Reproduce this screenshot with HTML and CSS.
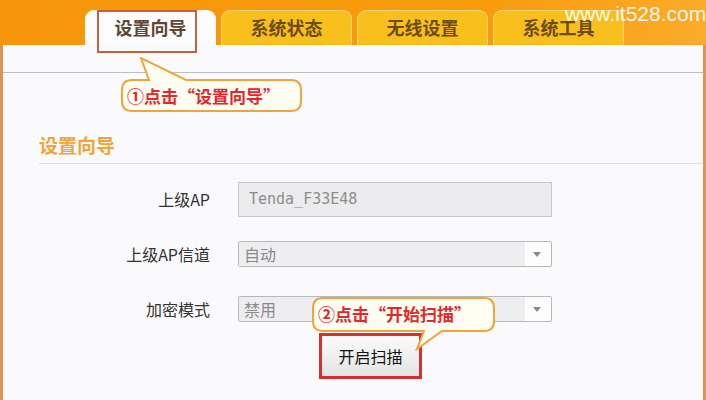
FILE: index.html
```html
<!DOCTYPE html>
<html>
<head>
  <title>设置向导</title>
  <link rel="stylesheet" href="styles.css">
</head>
<body>
  <div class="page">
    <div class="frame">
      <!-- top tab bar -->
      <div class="header">
        <div class="tab active">设置向导</div>
        <div class="tab">系统状态</div>
        <div class="tab">无线设置</div>
        <div class="tab">系统工具</div>
      </div>
      <div class="subbar"></div>

      <div class="section">
        <div class="section-title">设置向导</div>
      </div>

      <!-- wizard form -->
      <div class="form">
        <div class="label">上级AP</div>
        <div class="field">
          <div class="input disabled">Tenda_F33E48</div>
        </div>

        <div class="label">上级AP信道</div>
        <div class="field">
          <div class="select">
            <span class="select-value">自动</span>
            <span class="arrow"></span>
          </div>
        </div>

        <div class="label">加密模式</div>
        <div class="field">
          <div class="select">
            <span class="select-value">禁用</span>
            <span class="arrow"></span>
          </div>
        </div>
      </div>

      <div class="actions">
        <button class="scan-btn">开启扫描</button>
      </div>
    </div>

    <!-- annotations drawn over the screenshot -->
    <div class="watermark">www.it528.com</div>
    <div class="tab-mark"></div>

    <div class="callout callout-1">
      <svg width="182" height="56" viewBox="0 0 182 56">
        <path d="M11,23 H28 L20,1 L65,23 H170 Q180,23 180,33 V44 Q180,54 170,54 H11 Q1,54 1,44 V33 Q1,23 11,23 Z" fill="#fffdf2" stroke="#eea63c" stroke-width="2"/>
      </svg>
      <span class="callout-text">①点击“设置向导”</span>
    </div>

    <div class="callout callout-2">
      <svg width="184" height="54" viewBox="0 0 184 54">
        <path d="M11,1 H172 Q182,1 182,11 V24 Q182,34 172,34 H130 L105,52 L112,34 H11 Q1,34 1,24 V11 Q1,1 11,1 Z" fill="#fffdf2" stroke="#eea63c" stroke-width="2"/>
      </svg>
      <span class="callout-text">②点击“开始扫描”</span>
    </div>
  </div>
</body>
</html>
```

FILE: styles.css
```css
body {
  margin: 0;
  padding: 0;
  background-color: #fafafc;
  font-family: "Noto Sans CJK SC", "Liberation Sans", sans-serif;
}

.page {
  position: relative;
  width: 706px;
  height: 400px;
  overflow: hidden;
}

.frame {
  height: 400px;
  border-left: 3px solid #d99456;
  border-right: 3px solid #d99456;
  background-color: #fafafc;
}

/* header and tabs */

.header {
  height: 45px;
  margin: 0 -3px;
  padding-left: 85px;
  display: flex;
  align-items: flex-end;
  gap: 5px;
  background: linear-gradient(90deg, #f7960a 0%, #f89c0e 70%, #fbab2a 100%);
}

.tab {
  width: 131px;
  height: 35px;
  box-sizing: border-box;
  display: flex;
  align-items: center;
  justify-content: center;
  background-color: #f9bf1c;
  border: 1px solid #fcd775;
  border-bottom: none;
  border-radius: 9px 9px 0 0;
  color: #6b4c12;
  font-size: 18px;
  font-weight: bold;
  padding-bottom: 2px;
}

.tab.active {
  background-color: #fcfcfd;
  border-color: #fcfcfd;
  color: #5e4632;
}

.subbar {
  height: 27px;
  border-bottom: 1px solid #bdbdc2;
}

.section {
  padding: 60px 0 0 36px;
}

.section-title {
  font-size: 19px;
  font-weight: bold;
  line-height: 24px;
  color: #f0a53c;
  padding-bottom: 6px;
  border-bottom: 1px solid #e2e2e6;
}

/* form */

.form {
  display: grid;
  grid-template-columns: 207px 314px;
  grid-auto-rows: 40px;
  column-gap: 28px;
  row-gap: 15px;
  margin-top: 15px;
}

.label {
  display: flex;
  align-items: center;
  justify-content: flex-end;
  font-size: 16px;
  color: #333333;
}

.field {
  display: flex;
  align-items: center;
}

.input {
  width: 100%;
  height: 35px;
  box-sizing: border-box;
  padding-left: 10px;
  display: flex;
  align-items: center;
  border: 1px solid #c8c8cc;
  font-family: "DejaVu Sans Mono", "Liberation Mono", monospace;
  font-size: 15px;
  color: #8c8c8c;
}

.input.disabled {
  background-color: #ececee;
}

.select {
  position: relative;
  width: 100%;
  height: 26px;
  box-sizing: border-box;
  display: flex;
  align-items: center;
  border: 1px solid #b8b8bc;
  border-radius: 2px;
  background-color: #fdfdfd;
}

.select-value {
  width: 286px;
  height: 100%;
  box-sizing: border-box;
  padding-left: 5px;
  display: flex;
  align-items: center;
  background-color: #eeeef0;
  font-size: 16px;
  color: #8a8a8a;
}

.arrow {
  margin-left: 8px;
  width: 0;
  height: 0;
  border-left: 4px solid transparent;
  border-right: 4px solid transparent;
  border-top: 5px solid #8a8a8a;
}

.actions {
  padding: 4px 0 0 316px;
}

.scan-btn {
  width: 103px;
  height: 46px;
  border: 3px solid #d8302e;
  background: linear-gradient(#fbfbfb, #e4e4e6);
  font-family: "Noto Sans CJK SC", sans-serif;
  font-size: 16px;
  color: #111111;
}

/* overlays */

.watermark {
  position: absolute;
  top: 2px;
  left: 565px;
  font-family: "Liberation Sans", sans-serif;
  font-size: 21px;
  color: #ffffff;
  opacity: 0.92;
}

.tab-mark {
  position: absolute;
  left: 97px;
  top: 10px;
  width: 100px;
  height: 43px;
  box-sizing: border-box;
  border: 2px solid #c4623c;
}

.callout {
  position: absolute;
}

.callout svg {
  display: block;
}

.callout-1 {
  left: 121px;
  top: 57px;
}

.callout-2 {
  left: 312px;
  top: 297px;
}

.callout-text {
  position: absolute;
  left: 6px;
  font-size: 17px;
  font-weight: bold;
  color: #e5262a;
  white-space: nowrap;
}

.callout-1 .callout-text {
  top: 26px;
  line-height: 26px;
}

.callout-2 .callout-text {
  top: 4px;
  line-height: 26px;
}
```
